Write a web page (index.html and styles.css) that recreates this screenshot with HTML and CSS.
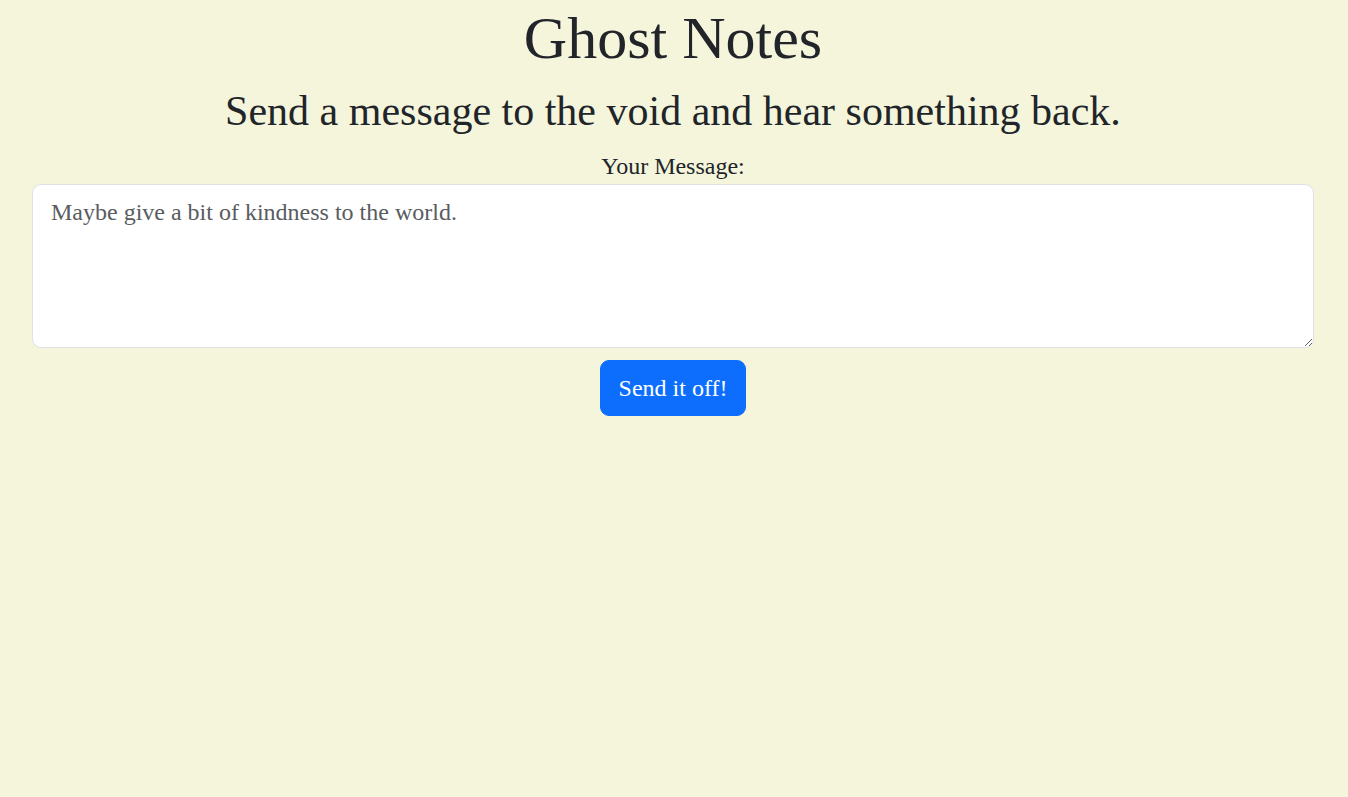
FILE: index.html
```html
<!DOCTYPE html>
<html lang="en">
<head>
<meta charset="utf-8">
<title>Ghost Notes</title>
<link rel="stylesheet" href="styles.css">
</head>
<body>
<main class="page">
  <h1 class="title">Ghost Notes</h1>
  <h3 class="subtitle">Send a message to the void and hear something back.</h3>
  <form class="note-form">
    <label class="label" for="msg">Your Message:</label>
    <textarea id="msg" class="message" rows="4" placeholder="Maybe give a bit of kindness to the world."></textarea>
    <button type="button" class="send">Send it off!</button>
  </form>
</main>
</body>
</html>
```

FILE: styles.css
```css
* { box-sizing: border-box; }
html { font-size: 24px; }
body {
  margin: 0;
  background: #f5f5dc;
  color: #212529;
  font-family: "Liberation Serif", "Times New Roman", serif;
  font-size: 24px;
  line-height: 1.5;
}
.page {
  padding: 2px 34px 0 32px;
  text-align: center;
}
.title {
  margin: 0 0 12px;
  font-size: 60px;
  font-weight: 400;
  line-height: 1.2;
}
.subtitle {
  margin: 0 0 12px;
  font-size: 42px;
  font-weight: 400;
  line-height: 1.2;
}
.note-form {
  display: flex;
  flex-direction: column;
  align-items: center;
}
.label {
  display: block;
  line-height: 36px;
}
.message {
  display: block;
  width: 100%;
  height: 164px;
  padding: 9px 18px;
  font-family: inherit;
  font-size: 24px;
  line-height: 1.5;
  color: #212529;
  background: #fff;
  border: 1px solid #dee2e6;
  border-radius: 9px;
  resize: vertical;
}
.message::placeholder { color: #595c5f; opacity: 1; }
.send {
  margin-top: 12px;
  padding: 9px 18px;
  font-family: inherit;
  font-size: 24px;
  line-height: 1.5;
  color: #fff;
  background: #0d6efd;
  border: 1px solid #0d6efd;
  border-radius: 9px;
  cursor: pointer;
}
```
